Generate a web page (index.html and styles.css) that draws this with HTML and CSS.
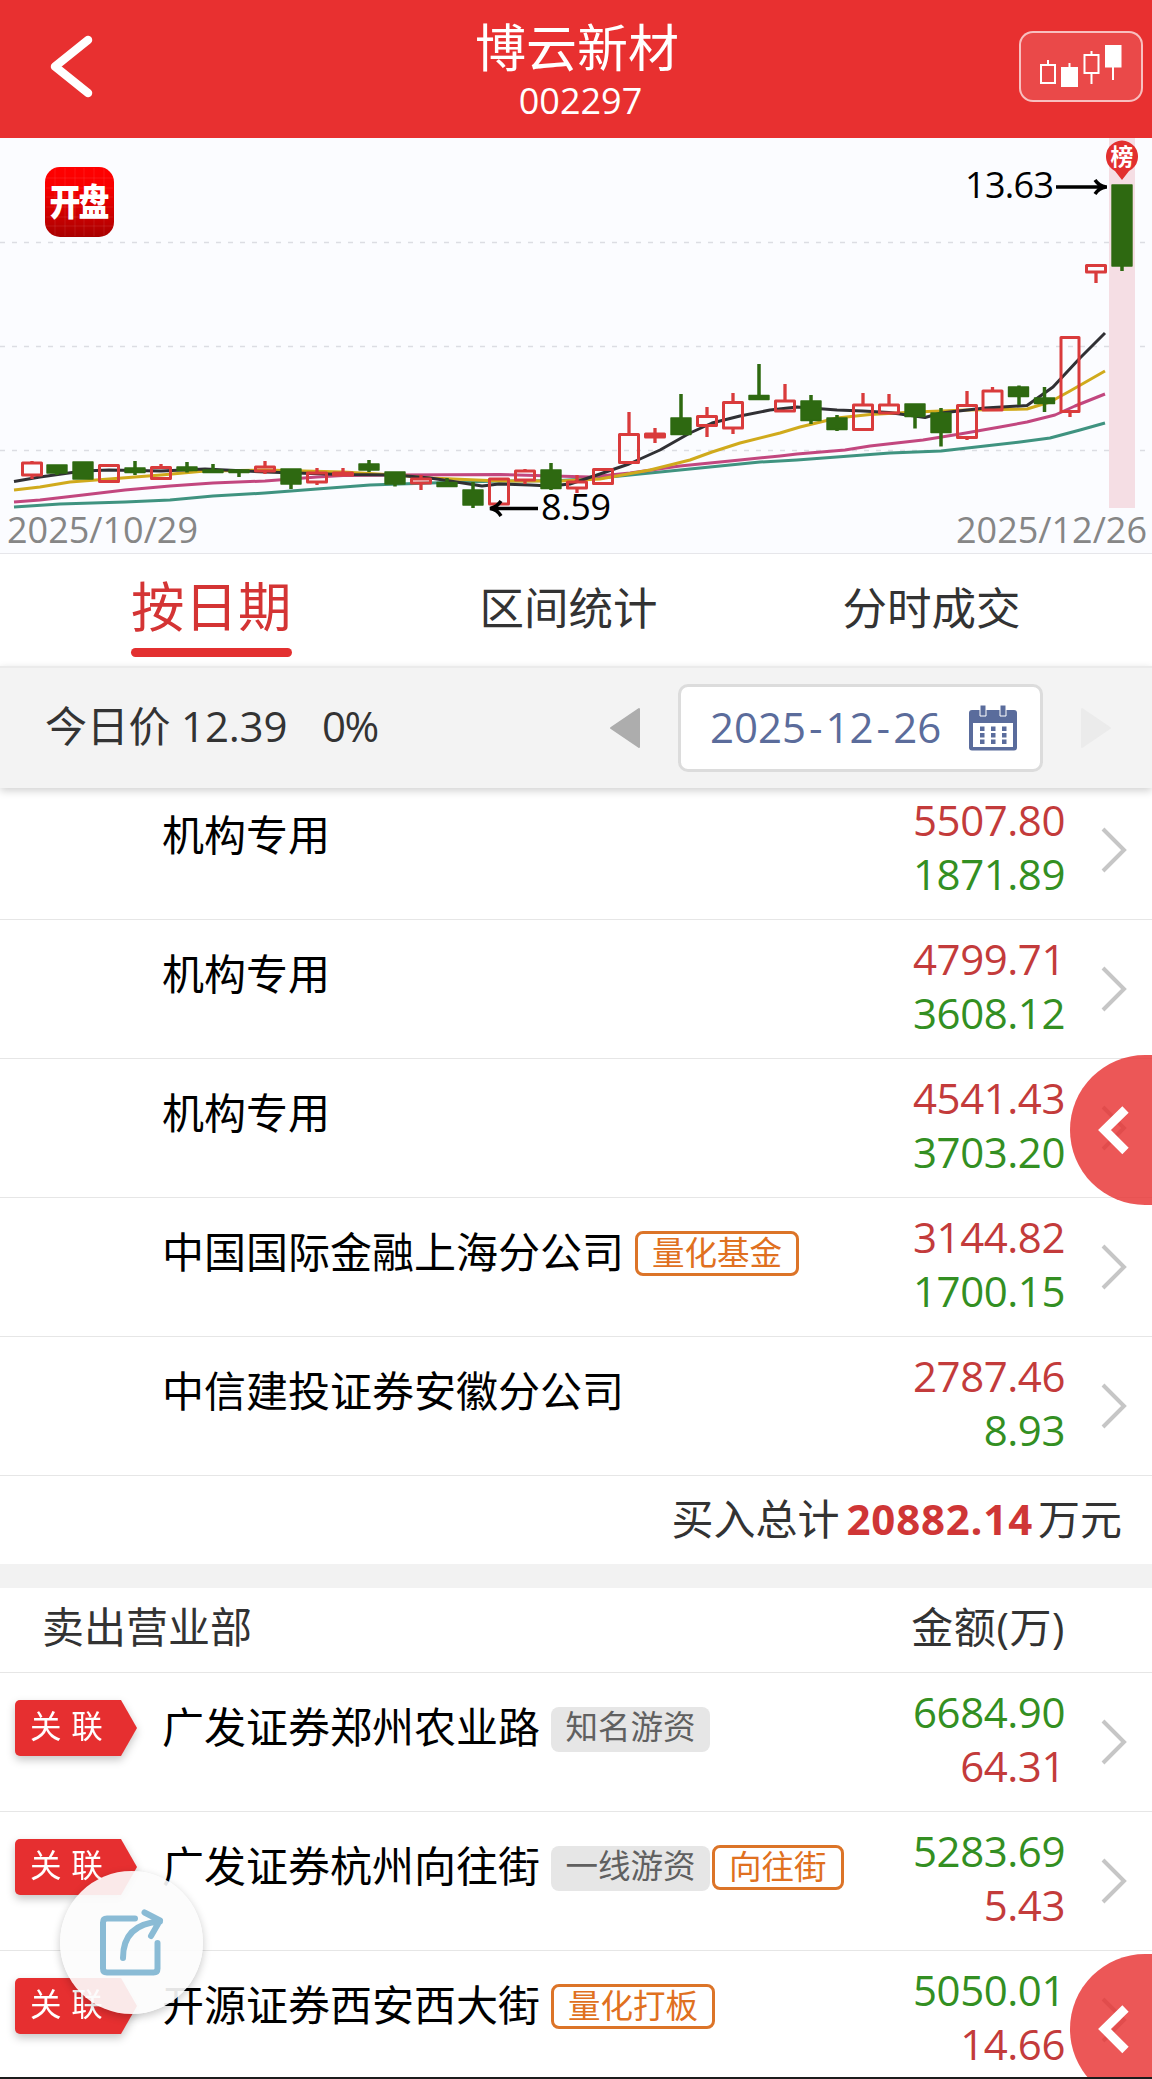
FILE: index.html
```html
<!DOCTYPE html>
<html lang="zh-CN">
<head>
<meta charset="utf-8">
<title>博云新材 002297</title>
<link rel="stylesheet" href="styles.css">
</head>
<body>
<svg class="defs" width="0" height="0">
  <symbol id="chevron" viewBox="0 0 28 48"><path d="M3 3 24 24 3 45" fill="none" stroke="#c6c6c6" stroke-width="4"/></symbol>
</svg>
<div class="app">
  <header class="header">
    <svg class="back" width="60" height="80" viewBox="0 0 60 80"><path d="M49 14 16 40.500 49 67" fill="none" stroke="#fff" stroke-width="8.500" stroke-linecap="round" stroke-linejoin="round"/></svg>
    <div class="heading">
      <h1 class="stock-name">博云新材</h1>
      <div class="stock-code">002297</div>
    </div>
    <button class="kline">
      <svg width="119" height="67" viewBox="1021 33 119 67">
        <g fill="none" stroke="#fff" stroke-width="2"><path d="M1041 65h14v18h-14zM1048 60v5M1069.500 63v5M1084.500 55h14v18h-14zM1091.500 51v4M1091.500 73v11M1113 66v14"/></g>
        <path d="M1061 67h17v20h-17zM1105 45h16.500v22.500h-16.500z" fill="#fff"/>
      </svg>
    </button>
  </header>

  <section class="chart">
    <svg width="1152" height="415" viewBox="0 138 1152 415">
      <defs>
        <linearGradient id="logo" x1="0" y1="0" x2="0" y2="1"><stop offset="0" stop-color="#f00"/><stop offset=".3" stop-color="#f80000"/><stop offset="1" stop-color="#a80000"/></linearGradient>
      </defs>
      <path d="M0 242.500h1146M0 346.500h1146M0 450.500h1146" stroke="#dcdde3" stroke-width="1.500" stroke-dasharray="5 7"/>
      <rect x="1109" y="138" width="26" height="370" fill="#f5dee4"/>
      <rect x="45" y="167" width="69" height="70" rx="15" fill="url(#logo)"/>
      <path d="M55 168v68M65 168v68M75 168v68M84 168v68M94 168v68M104 168v68M46 178h67M46 188h67M46 197h67M46 207h67M46 217h67M46 226h67" stroke="#fff" stroke-opacity=".09"/>
      <g transform="translate(79.500 215.500) scale(1 1.2)"><text class="logo-text" text-anchor="middle" textLength="60">开盘</text></g>
      <g fill="none" stroke-width="3" stroke-linejoin="round">
        <path stroke="#3f9380" d="M14 507 60 504 125 502 170 500 213 496 265 493 317 489 370 485 430 483 500 481 560 480.500 600 478 650 473 700 468 760 462 797 460 850 456 890 453 941 451 985 446 1020 442 1050 438 1080 430 1105 423"/>
        <path stroke="#c2477f" d="M14 502 40 500 83 495 125 490 170 486 213 483 265 481 317 477 343 475.500 395 475 500 474.500 590 477 630 473 680 466 740 460 780 456 797 454 845 450 870 446 923 440 960 434 1000 427 1027 422 1055 415 1075 406 1105 394"/>
        <path stroke="#d0aa1c" d="M14 490 40 487 70 482 109 479 161 475 205 471 265 470 343 472 395 475 430 478 500 481 560 481 600 479 650 470 690 460 712 452 740 443 780 433 800 427 837 418 870 414.500 915 412 967 410 1000 409.500 1027 409 1050 402 1070 391 1105 371"/>
        <path stroke="#303034" d="M14 481.500 40 477 83 471 109 470 161 471 205 469 265 472 343 474.500 395 475 430 478 450 481 482 486 499 484 530 485 550 486 570 484 597 475 629 464 660 450 690 433 712 423 740 416 770 410 797 407 837 410 863 411 889 412.500 925 417.500 941 413 985 408 1027 405.500 1053 387 1080 358 1105 333"/>
      </g>
      <g stroke="#2e6911" stroke-width="3.500" fill="none">
        <path d="M57 473v2M135 461v14M187 462v10.500M213 464v7M239 471v6M291 482v7M369 460v12M395 482v4.500M447 478v6M473 482v26M551 463v27M681 394v24M759 364v32M811 395v29M837 415v16M915 415v13.500M941 408v38.500M1019 385.500v19.500M1044.500 387v25M1122 264v7"/>
      </g>
      <g fill="#2e6911" stroke="#2e6911" stroke-width="1.400" stroke-linejoin="round">
        <path d="M47 465h20v8h-20zM73 462h20v17h-20zM125 468h20v4.500h-20zM177 467h20v3.500h-20zM203 470h20v2.500h-20zM229 470h20v2.500h-20zM281 469h20v15h-20zM359 464h20v6h-20zM385 472h20v12h-20zM437 482.500h20v4h-20zM463 490h20v15h-20zM541 470h20v18.500h-20zM671 418h20v16.500h-20zM749 395.500h20v4h-20zM801 401h20v19.500h-20zM827 418h20v11.500h-20zM905 404h20v12.500h-20zM931 413h20v19.500h-20zM1008.500 387h20v9.500h-20zM1034.500 398h20v5.500h-20zM1112 185h20v81h-20z"/>
      </g>
      <g stroke="#d93b3c" stroke-width="3.300" fill="none" stroke-linejoin="round">
        <path d="M32 461v2M32 475v4M161 464v3M265 461v6M265 471v3M317 468v4M317 482v3M343 468v5M421 475v4M421 483v7M525 469v3M525 480v4M577 475v7M577 488v5M629 412v23M655 428v15M707 407v10M707 426v11M733 393v10M733 428v6M785 384v17M863 393v12M889 394v11M967 391v14M967 438v2M992.500 387v4M1070 412v5M1096 272v11"/>
        <path stroke-width="3" d="M22.500 463h19v12h-19zM99.500 465.500h19v16h-19zM151.500 467.500h19v11h-19zM255.500 467h19v4h-19zM307.500 473h19v9h-19zM333.500 473h19v2h-19zM411.500 479h19v4h-19zM489.500 479h19v25h-19zM515.500 471h19v9h-19zM567.500 482h19v6h-19zM593.500 469.500h19v14h-19zM619.500 434.500h19v28h-19zM645.500 434h19v3h-19zM697.500 416.500h19v9h-19zM723.500 402.500h19v25.500h-19zM775.500 401h19v10h-19zM853.500 405h19v24.500h-19zM879.500 405h19v8h-19zM957.500 405.500h19v32h-19zM983 391h19v19h-19zM1061 337.500h18v74h-18zM1086.500 265.500h19v6.500h-19z"/>
      </g>
      <path d="M1122 180 1115 171A16 16 0 1 1 1129 171Z" fill="#e2302f"/>
      <text class="pin-text" x="1122" y="165" text-anchor="middle">榜</text>
      <g fill="none" stroke="#000" stroke-width="3.500"><path d="M1056 187h51M1095 180q4 6 11 7-7 1-11 7M490 508.500h48M501 501q-4 6-11 7.500 7 1 11 7.500"/></g>
      <text class="mark" x="965" y="198" textLength="89">13.63</text>
      <text class="mark" x="541" y="520" textLength="70">8.59</text>
      <text class="date" x="7" y="543" textLength="191">2025/10/29</text>
      <text class="date" x="956" y="543" textLength="191">2025/12/26</text>
    </svg>
  </section>

  <nav class="tabs">
    <a class="tab tab-active">按日期</a>
    <a class="tab">区间统计</a>
    <a class="tab">分时成交</a>
  </nav>

  <section class="datebar">
    <span class="price">今日价 12.39</span>
    <span class="change">0%</span>
    <svg class="prev" width="32" height="42" viewBox="0 0 32 42"><path d="M2 21 30 2V40Z" fill="#adadad" stroke="#adadad" stroke-width="2" stroke-linejoin="round"/></svg>
    <div class="picker">
      <span class="day">2025<i class="dash">-</i>12<i class="dash">-</i>26</span>
      <svg width="48" height="46" viewBox="0 0 48 46">
        <rect x="0" y="5" width="48" height="40.500" rx="3" fill="#5a6c9c"/>
        <path d="M4 18h40v24H4z" fill="#fff"/>
        <path d="M11 0h6v11h-6zM31 0h6v11h-6z" fill="#5a6c9c" stroke="#fff" stroke-width="1"/>
        <path d="M11 21.500h4.500v4.500H11zM22 21.500h4.500v4.500H22zM33 21.500h4.500v4.500H33zM11 28h4.500v4.500H11zM22 28h4.500v4.500H22zM33 28h4.500v4.500H33zM11 34.500h4.500v4.500H11zM22 34.500h4.500v4.500H22zM33 34.500h4.500v4.500H33z" fill="#5a6c9c"/>
      </svg>
    </div>
    <svg class="next" width="32" height="42" viewBox="0 0 32 42"><path d="M30 21 2 2V40Z" fill="#ebebeb" stroke="#ebebeb" stroke-width="2" stroke-linejoin="round"/></svg>
  </section>

  <section class="list list-buy">
    <div class="row"><div class="name">机构专用</div><div class="nums"><span class="red">5507.80</span><span class="green">1871.89</span></div><svg class="chev"><use href="#chevron"/></svg></div>
    <div class="row"><div class="name">机构专用</div><div class="nums"><span class="red">4799.71</span><span class="green">3608.12</span></div><svg class="chev"><use href="#chevron"/></svg></div>
    <div class="row"><div class="name">机构专用</div><div class="nums"><span class="red">4541.43</span><span class="green">3703.20</span></div><svg class="chev"><use href="#chevron"/></svg></div>
    <div class="row"><div class="name">中国国际金融上海分公司<span class="tag tag-orange">量化基金</span></div><div class="nums"><span class="red">3144.82</span><span class="green">1700.15</span></div><svg class="chev"><use href="#chevron"/></svg></div>
    <div class="row"><div class="name">中信建投证券安徽分公司</div><div class="nums"><span class="red">2787.46</span><span class="green">8.93</span></div><svg class="chev"><use href="#chevron"/></svg></div>
    <div class="total">买入总计<b class="total-num">20882.14</b>万元</div>
  </section>

  <div class="list-head"><span>卖出营业部</span><span class="unit">金额(万)</span></div>
  <section class="list list-sell">
    <div class="row"><div class="link"><span>关 联</span></div><div class="name">广发证券郑州农业路<span class="tag tag-gray">知名游资</span></div><div class="nums"><span class="green">6684.90</span><span class="red">64.31</span></div><svg class="chev"><use href="#chevron"/></svg></div>
    <div class="row"><div class="link"><span>关 联</span></div><div class="name">广发证券杭州向往街<span class="tag tag-gray">一线游资</span><span class="tag tag-orange tag-next">向往街</span></div><div class="nums"><span class="green">5283.69</span><span class="red">5.43</span></div><svg class="chev"><use href="#chevron"/></svg></div>
    <div class="row"><div class="link"><span>关 联</span></div><div class="name">开源证券西安西大街<span class="tag tag-orange">量化打板</span></div><div class="nums"><span class="green">5050.01</span><span class="red">14.66</span></div><svg class="chev"><use href="#chevron"/></svg></div>
  </section>

  <svg class="side side-upper" width="82" height="150" viewBox="0 0 82 150"><path d="M82 0H75A75 75 0 0 0 75 150H82Z" fill="#e83030" fill-opacity=".81"/><path d="M55.500 54.500 34.500 75 55.500 96" fill="none" stroke="#fff" stroke-width="9"/></svg>
  <svg class="side side-lower" width="82" height="150" viewBox="0 0 82 150"><path d="M82 0H75A75 75 0 0 0 75 150H82Z" fill="#e83030" fill-opacity=".81"/><path d="M55.500 54.500 34.500 75 55.500 96" fill="none" stroke="#fff" stroke-width="9"/></svg>
  <button class="share">
    <svg width="68" height="70" viewBox="98 1908 68 70"><g fill="none" stroke="#8abbd5" stroke-width="6" stroke-linecap="round" stroke-linejoin="round"><path d="M135 1918.500H107Q103 1918.500 103 1922.500V1968.500Q103 1972.500 107 1972.500H153.500Q157.500 1972.500 157.500 1968.500V1943"/><path d="M123 1958Q123 1924 160 1921.500M144.500 1912.500 160 1920.500 151 1936"/></g></svg>
  </button>
  <div class="home-edge"></div>
</div>
</body>
</html>
```
FILE: styles.css
```css
* { box-sizing: border-box; }
body { margin: 0; background: #fff; }
button { padding: 0; margin: 0; }
.defs { position: absolute; }
.app {
  position: relative;
  width: 1152px;
  height: 2079px;
  overflow: hidden;
  background: #fff;
  color: #333;
  font: 42px/54px "Open Sans", "Noto Sans CJK SC", sans-serif;
  white-space: nowrap;
}

.header {
  display: flex;
  align-items: flex-start;
  justify-content: space-between;
  height: 138px;
  background: #e83030;
  color: #fff;
}
.back { margin: 26px 0 0 39px; width: 60px; }
.heading { text-align: center; margin-left: 36px; }
.stock-name { margin: 14px 0 0; font-size: 51px; line-height: 66px; font-weight: 400; }
.stock-code { margin-top: 1px; padding-left: 7px; font-size: 36px; line-height: 40px; }
.kline {
  width: 124px;
  height: 71px;
  margin: 31px 9px 0 0;
  border: 2px solid rgba(255, 255, 255, .65);
  border-radius: 14px;
  background: rgba(255, 255, 255, .12);
}
.kline svg { display: block; }

.chart { height: 416px; background: #fbfcff; border-bottom: 1px solid #e6e6ea; }
.chart svg { display: block; }
.logo-text { font: 900 31px "Noto Sans CJK SC", sans-serif; fill: #fff; }
.pin-text { font: 700 23px "Noto Sans CJK SC", sans-serif; fill: #fff; }
.mark { font-size: 36px; fill: #000; }
.date { font-size: 36px; fill: #868686; }

.tabs { display: flex; height: 112px; padding-left: 131px; }
.tab { font-size: 44.5px; line-height: 108px; margin-right: 185px; }
.tab-active {
  position: relative;
  width: 162px;
  margin-right: 188px;
  font-size: 53.5px;
  line-height: 106px;
  color: #d43434;
}
.tab-active::after {
  content: "";
  position: absolute;
  left: 0;
  right: 0;
  top: 94px;
  height: 9px;
  border-radius: 5px;
  background: #e33030;
}

.datebar {
  position: relative;
  z-index: 1;
  display: flex;
  align-items: center;
  height: 122px;
  padding-left: 45px;
  background: #f3f3f3;
  border-top: 2px solid #ebebeb;
  box-shadow: 0 3px 8px rgba(0, 0, 0, .18);
}
.price { width: 277px; padding-bottom: 4px; letter-spacing: -.2px; }
.change { width: 287px; padding-bottom: 4px; letter-spacing: -1.5px; }
.picker {
  display: flex;
  align-items: center;
  justify-content: space-between;
  width: 365px;
  height: 88px;
  margin: 0 37px;
  padding: 0 23px 0 29px;
  border: 3px solid #dcdcdc;
  border-radius: 10px;
  background: #fff;
  color: #5b6c9b;
}
.day { padding-bottom: 2px; }
.dash { font-style: normal; padding: 0 3px; }

.list-buy { margin-top: -7px; }
.row {
  display: flex;
  position: relative;
  height: 139px;
  padding-left: 162px;
  border-bottom: 1px solid #e6e6e6;
}
.name { display: flex; flex: 1; height: 54px; margin-top: 27px; color: #000; }
.nums { display: flex; flex-direction: column; align-items: flex-end; padding-top: 12px; letter-spacing: -.45px; }
.red { color: #c33b3b; }
.green { color: #338f22; }
.chev { width: 28px; height: 48px; margin: 45px 24px 0 35px; }
.tag { height: 45px; margin: 7px 0 0 11px; border-radius: 8px; font-size: 32.5px; line-height: 40px; }
.tag-gray { padding: 0 14.5px; background: #e6e6e6; color: #606060; }
.tag-orange { margin-top: 6px; padding: 0 14px; border: 3px solid #dc7428; line-height: 38px; color: #e07020; }
.tag-next { margin-left: 2px; }
.total { height: 88px; padding-right: 30px; line-height: 86px; text-align: right; }
.total-num { margin: 0 5px 0 7px; color: #cf3636; letter-spacing: .8px; }
.list-head {
  display: flex;
  justify-content: space-between;
  height: 109px;
  padding: 0 87px 0 42px;
  border-top: 24px solid #f2f2f2;
  border-bottom: 1px solid #e6e6e6;
  line-height: 78px;
}
.unit { letter-spacing: .6px; }
/* Ribbon pinned over the row's left gutter */
.link { position: absolute; left: 15px; top: 27px; filter: drop-shadow(0 4px 4px rgba(0, 0, 0, .22)); }
.link span {
  display: block;
  width: 122px;
  height: 56px;
  padding-left: 15px;
  border-radius: 5px 0 0 5px;
  background: #e62f30;
  clip-path: polygon(0 0, 106px 0, 100% 50%, 106px 100%, 0 100%);
  color: #fff;
  font-size: 31.5px;
  line-height: 52px;
  word-spacing: 1.5px;
}

.side { position: absolute; right: 0; z-index: 2; }
.side-upper { top: 1055px; }
.side-lower { top: 1954px; }
.share {
  position: absolute;
  left: 60px;
  top: 1871px;
  z-index: 2;
  width: 143px;
  height: 143px;
  padding: 4px 0 0 1px;
  border: 0;
  border-radius: 50%;
  background: rgba(252, 252, 252, .91);
  box-shadow: 0 3px 8px rgba(0, 0, 0, .22);
}
.home-edge { position: absolute; left: 0; right: 0; bottom: 0; z-index: 3; height: 2px; background: #1c1c1c; }
```
